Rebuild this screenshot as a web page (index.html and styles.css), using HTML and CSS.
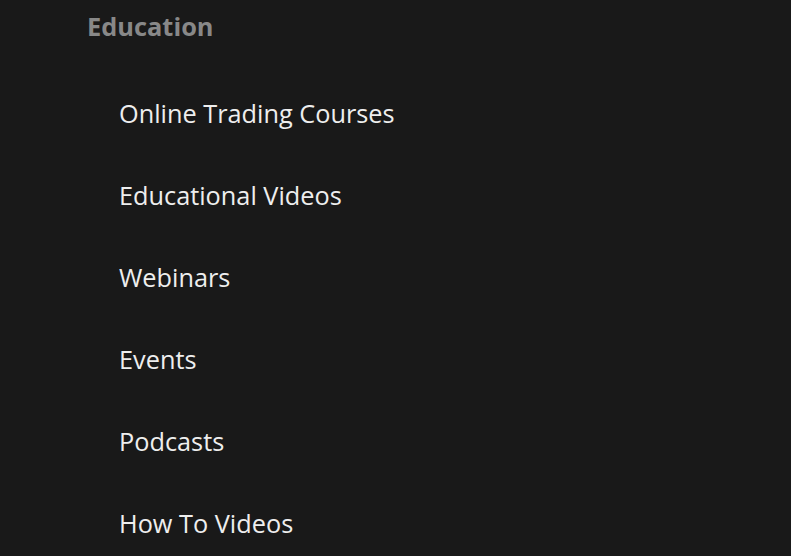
FILE: index.html
```html
<!DOCTYPE html>
<html>
<head>
<meta charset="utf-8">
<link rel="stylesheet" href="styles.css">
</head>
<body>
<nav class="menu">
  <h2 class="menu-title">Education</h2>
  <ul class="menu-list">
    <li class="menu-item">Online Trading Courses</li>
    <li class="menu-item">Educational Videos</li>
    <li class="menu-item">Webinars</li>
    <li class="menu-item">Events</li>
    <li class="menu-item">Podcasts</li>
    <li class="menu-item">How To Videos</li>
  </ul>
</nav>
</body>
</html>
```
FILE: styles.css
```css
html, body {
  margin: 0;
  padding: 0;
  background: #191919;
  height: 100%;
  overflow: hidden;
}
body {
  font-family: "Open Sans", sans-serif;
}
.menu {
  padding-left: 87px;
}
.menu-title {
  margin: 0;
  padding-top: 8px;
  font-size: 25.4px;
  font-weight: 700;
  line-height: 36px;
  color: #888888;
}
.menu-list {
  list-style: none;
  margin: 0;
  padding: 51px 0 0 32px;
}
.menu-item {
  font-size: 25.3px;
  line-height: 36px;
  color: #eeeeee;
  margin-bottom: 46px;
}
```
